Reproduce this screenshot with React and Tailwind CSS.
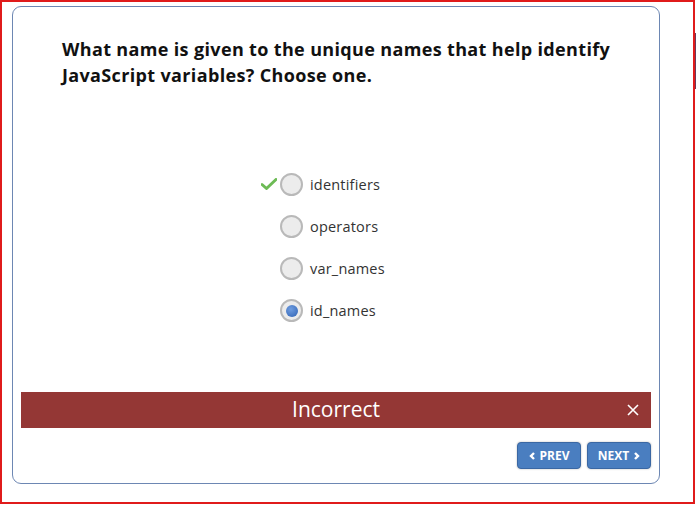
export default function App() {
  const options = ["identifiers", "operators", "var_names", "id_names"];
  return (
    <div className="w-[696px] h-[505px] bg-white relative" style={{ fontFamily: '"Open Sans", sans-serif' }}>
      <div className="w-[695px] h-[504px] border-2 border-[#e01b1b] pt-[4px] pl-[10px]">
        <div className="w-[648px] h-[478px] border border-[#6d87b3] rounded-[9px] flex flex-col">
          <h1 className="mt-[29px] ml-[49px] mr-[20px] text-[18px] leading-[26px] font-bold text-[#111] tracking-[0.35px]">
            What name is given to the unique names that help identify JavaScript variables? Choose one.
          </h1>
          <div className="mt-[85px] ml-[267px] flex flex-col gap-[19px]">
            {options.map((o, i) => (
              <div key={o} className="flex items-center h-[23px] relative">
                {i === 0 && (
                  <svg className="absolute left-[-19px] top-[5px]" width="16" height="12" viewBox="0 0 16 12">
                    <path d="M1 6.5 L5.5 10.5 L15 1.5" fill="none" stroke="#6dbb55" strokeWidth="3" strokeLinecap="round" strokeLinejoin="round" />
                  </svg>
                )}
                <span className="w-[23px] h-[23px] rounded-full border-2 border-[#b9b9b9] bg-[#ececec] flex items-center justify-center">
                  {i === 3 && <span className="w-[12px] h-[12px] rounded-full bg-[radial-gradient(circle_at_40%_35%,#6f9de0,#2f62b3)]" />}
                </span>
                <span className="ml-[7px] text-[14.5px] tracking-[0.2px] text-[#333]">{o}</span>
              </div>
            ))}
          </div>
          <div className="mt-auto mx-[8px] h-[36px] bg-[#943735] flex items-center relative">
            <span className="flex-1 text-center text-white text-[21px]">Incorrect</span>
            <svg className="absolute right-[12px] top-[12px]" width="12" height="12" viewBox="0 0 12 12">
              <path d="M1 1 L11 11 M11 1 L1 11" stroke="white" strokeWidth="1.6" />
            </svg>
          </div>
          <div className="flex justify-end gap-[6px] mr-[8px] mt-[14px] mb-[14px]">
            <button className="w-[64px] h-[27px] rounded-[4px] bg-[#4a7ec0] border border-[#3a67a3] text-white text-[12px] font-bold flex items-center justify-center gap-[5px] shadow-[0_0_2px_rgba(0,0,0,0.3)]">
              <svg width="6" height="8" viewBox="0 0 6 8"><path d="M5 1 L2 4 L5 7" fill="none" stroke="white" strokeWidth="2.4" /></svg>
              PREV
            </button>
            <button className="w-[64px] h-[27px] rounded-[4px] bg-[#4a7ec0] border border-[#3a67a3] text-white text-[12px] font-bold flex items-center justify-center gap-[5px] shadow-[0_0_2px_rgba(0,0,0,0.3)]">
              NEXT
              <svg width="6" height="8" viewBox="0 0 6 8"><path d="M1 1 L4 4 L1 7" fill="none" stroke="white" strokeWidth="2.4" /></svg>
            </button>
          </div>
        </div>
      </div>
      <div className="absolute right-0 top-[33px] w-[1px] h-[56px] bg-[#6b3a5a]" />
    </div>
  );
}
